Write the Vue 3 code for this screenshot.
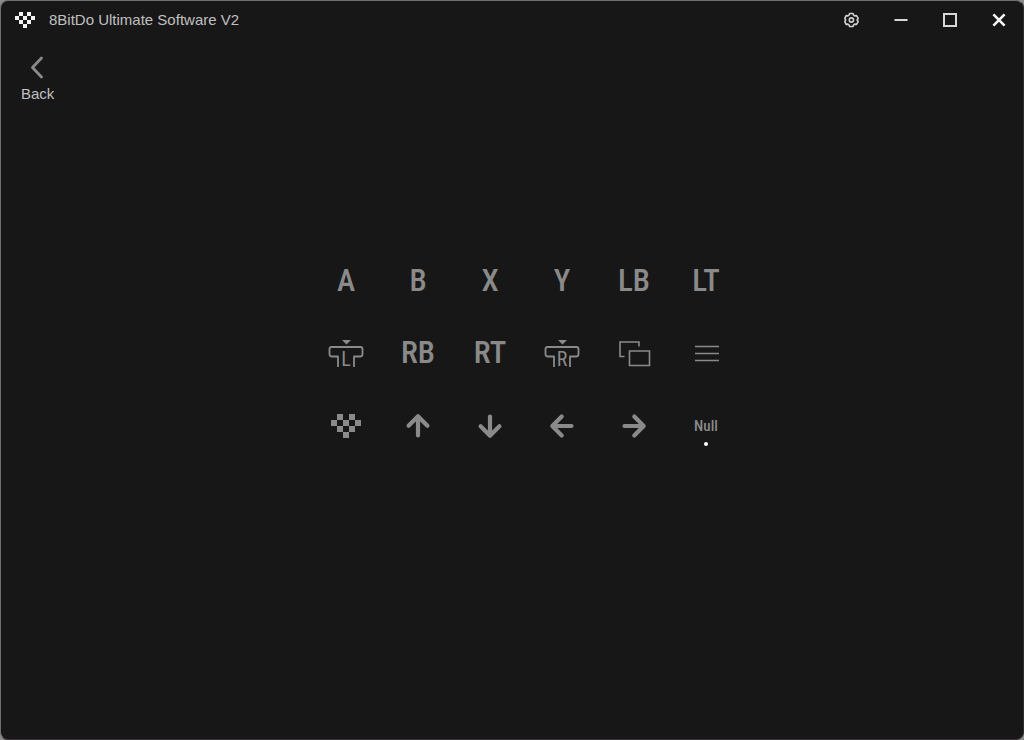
<template>
  <div class="window">
    <header class="titlebar">
      <svg class="logo" viewBox="0 0 20 16" aria-hidden="true">
        <path :d="heartPath" fill="#f2f2f2" />
      </svg>
      <h1>8BitDo Ultimate Software V2</h1>
      <div class="controls">
        <button type="button" aria-label="Settings">
          <svg width="16" height="16" viewBox="0 0 16 16" fill="none" stroke="#d0d0d0" stroke-width="1.6" stroke-linejoin="round">
            <path d="M5.6 1.5h3.4l.6 1.7 1.1.7 1.8-.3 1.7 2.8L13.1 8l1.1 1.6-1.7 2.8-1.8-.3-1.1.7-.6 1.7H5.6L5 12.8l-1.1-.7-1.8.3L.8 9.6 1.7 8 .8 6.4l1.3-2.8 1.8.3L5 3.2z" />
            <circle cx="7.4" cy="8" r="2.1" />
          </svg>
        </button>
        <button type="button" aria-label="Minimize">
          <svg width="16" height="16" viewBox="0 0 16 16" fill="none" stroke="#d8d8d8" stroke-width="2">
            <path d="M1.5 8h13" />
          </svg>
        </button>
        <button type="button" aria-label="Maximize">
          <svg width="16" height="16" viewBox="0 0 16 16" fill="none" stroke="#d8d8d8" stroke-width="2">
            <path d="M2 2h12v12H2z" />
          </svg>
        </button>
        <button type="button" aria-label="Close">
          <svg width="16" height="16" viewBox="0 0 16 16" fill="none" stroke="#f4f4f4" stroke-width="2.6">
            <path d="M2.4 2.4l11.2 11.2M13.6 2.4L2.4 13.6" />
          </svg>
        </button>
      </div>
    </header>

    <nav>
      <button type="button" class="back">
        <svg width="16" height="24" viewBox="0 0 16 24" fill="none" stroke="#8a8a8a" stroke-width="2.8" stroke-linecap="round" stroke-linejoin="round">
          <path d="M11.5 3L2.5 12.5 11.5 22" />
        </svg>
        <span>Back</span>
      </button>
    </nav>

    <main>
      <div class="keys">
        <button
          v-for="key in keys"
          :key="key.id"
          type="button"
          class="key"
          :class="{ small: key.id === 'null' }"
          :aria-label="key.label || key.name"
          :aria-pressed="selected === key.id"
          @click="selected = key.id"
        >
          <span v-if="key.label">{{ key.label }}</span>

          <!-- extra bumpers: outline with a letter between the legs -->
          <svg v-else-if="key.bumper" width="36" height="40" viewBox="0 -5 36 40">
            <path d="M14 1h9l-4.5 4.5z" fill="#8a8a8a" />
            <path d="M10 28V17.5H4Q1.5 17.5 1.5 15V10Q1.5 8 3.5 8H32.5Q34.5 8 34.5 10V15Q34.5 17.5 32 17.5H26V28" fill="none" stroke="#8a8a8a" stroke-width="1.8" stroke-linejoin="round" />
            <text x="18" y="27" text-anchor="middle" class="bumper-letter">{{ key.bumper }}</text>
          </svg>

          <svg v-else-if="key.id === 'view'" width="34" height="28" viewBox="0 0 34 28" fill="none" stroke="#8a8a8a" stroke-width="1.6">
            <path d="M7.5 16.5H3V2h19v4.5" />
            <path d="M12.5 11h20v14.5h-20z" />
          </svg>

          <svg v-else-if="key.id === 'menu'" width="26" height="18" viewBox="0 0 26 18" fill="none" stroke="#8a8a8a" stroke-width="1.6">
            <path d="M2 1.5h24M2 8.5h24M2 15.5h24" />
          </svg>

          <svg v-else-if="key.id === 'home'" width="30" height="24" viewBox="0 0 20 16">
            <path :d="heartPath" fill="#8a8a8a" />
          </svg>

          <svg v-else width="26" height="26" viewBox="0 0 26 26" fill="none" stroke="#8a8a8a" stroke-width="4.2" stroke-linecap="round" stroke-linejoin="round">
            <path :transform="`rotate(${key.turn} 13 13)`" d="M13 22.5V3.5M3.6 12.7L13 3.3l9.4 9.4" />
          </svg>

          <i v-if="selected === key.id" class="dot"></i>
        </button>
      </div>
    </main>
  </div>
</template>

<script setup>
import { ref } from 'vue'

// ── Checkered heart, one 4x4 square per cell ──
const heartCells = [[1, 0], [3, 0], [0, 1], [2, 1], [4, 1], [1, 2], [3, 2], [2, 3]]
const heartPath = heartCells.map(([x, y]) => `M${x * 4} ${y * 4}h4v4h-4z`).join('')

const selected = ref('null')

const keys = [
  { id: 'a', label: 'A' },
  { id: 'b', label: 'B' },
  { id: 'x', label: 'X' },
  { id: 'y', label: 'Y' },
  { id: 'lb', label: 'LB' },
  { id: 'lt', label: 'LT' },
  { id: 'l4', name: 'Left extra bumper', bumper: 'L' },
  { id: 'rb', label: 'RB' },
  { id: 'rt', label: 'RT' },
  { id: 'r4', name: 'Right extra bumper', bumper: 'R' },
  { id: 'view', name: 'View' },
  { id: 'menu', name: 'Menu' },
  { id: 'home', name: 'Home' },
  { id: 'up', name: 'Up', turn: 0 },
  { id: 'down', name: 'Down', turn: 180 },
  { id: 'left', name: 'Left', turn: -90 },
  { id: 'right', name: 'Right', turn: 90 },
  { id: 'null', label: 'Null' },
]
</script>

<style>
body {
  margin: 0;
  background: #8c8c8c;
}
</style>

<style scoped>
.window {
  display: flex;
  flex-direction: column;
  box-sizing: border-box;
  min-height: 100vh;
  border: 1px solid #6e706f;
  border-bottom-color: #3a3338;
  border-right-color: #2c2c2c;
  border-radius: 8px;
  background: #171717;
  color: #c0c0c0;
  font-family: "Liberation Sans", Arial, sans-serif;
}

button {
  display: flex;
  align-items: center;
  justify-content: center;
  padding: 0;
  border: none;
  background: none;
  color: inherit;
  font: inherit;
  cursor: pointer;
}

.titlebar {
  display: flex;
  align-items: center;
  height: 38px;
  padding-left: 14px;
}

.logo {
  width: 20px;
  height: 16px;
}

h1 {
  margin: 0 0 0 14px;
  font-size: 15px;
  font-weight: 400;
  line-height: 20px;
}

.controls {
  display: flex;
  margin-left: auto;
}

.controls button {
  width: 49px;
  height: 38px;
}

nav {
  display: flex;
  padding: 16px 20px 0;
}

.back {
  flex-direction: column;
  gap: 5px;
  font-size: 15px;
  line-height: 20px;
}

main {
  display: flex;
  flex: 1;
  justify-content: center;
  padding: 142px 0 40px 28px;
}

.keys {
  display: grid;
  grid-template-columns: repeat(6, 72px);
  grid-auto-rows: 72px;
  align-content: start;
}

.key {
  position: relative;
  color: #8a8a8a;
  font-family: "Roboto Condensed", "Liberation Sans Narrow", "Liberation Sans", sans-serif;
  font-size: 31px;
  font-weight: 500;
  line-height: 36px;
}

.key span {
  padding-bottom: 2px;
}

.small {
  font-size: 15px;
}

.small span {
  padding-bottom: 0;
}

.bumper-letter {
  fill: #8a8a8a;
  font-size: 20px;
  font-weight: 400;
}

.dot {
  position: absolute;
  bottom: 16px;
  left: 34px;
  width: 4px;
  height: 4px;
  border-radius: 50%;
  background: #fff;
}
</style>
